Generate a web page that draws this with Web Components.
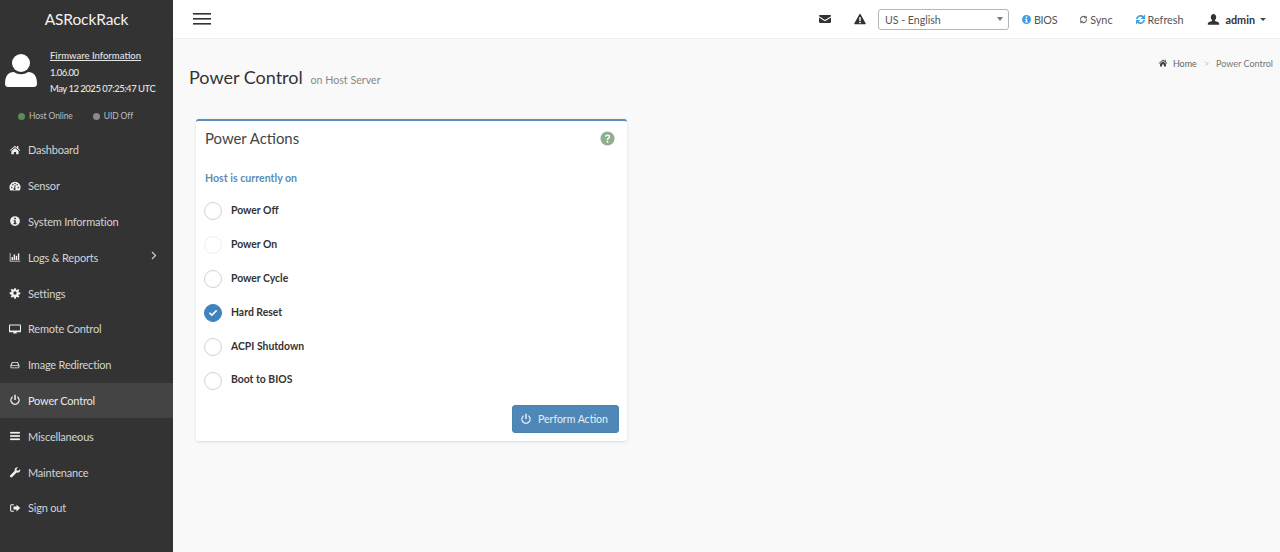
<!DOCTYPE html>
<html>
<head>
<meta charset="utf-8">
<title>Power Control</title>
<style>
html, body { margin: 0; height: 100%; }
body { font-family: Lato, "Noto Sans", "Liberation Sans", sans-serif; background: #f9f9f9; overflow: hidden; }
</style>
</head>
<body>

<bmc-app>
    <bmc-sidebar slot="side">
        <bmc-nav-item icon="home">Dashboard</bmc-nav-item>
        <bmc-nav-item icon="gauge">Sensor</bmc-nav-item>
        <bmc-nav-item icon="info">System Information</bmc-nav-item>
        <bmc-nav-item icon="chart" more>Logs &amp; Reports</bmc-nav-item>
        <bmc-nav-item icon="gear">Settings</bmc-nav-item>
        <bmc-nav-item icon="desktop">Remote Control</bmc-nav-item>
        <bmc-nav-item icon="hdd">Image Redirection</bmc-nav-item>
        <bmc-nav-item icon="power" active>Power Control</bmc-nav-item>
        <bmc-nav-item icon="bars">Miscellaneous</bmc-nav-item>
        <bmc-nav-item icon="wrench">Maintenance</bmc-nav-item>
        <bmc-nav-item icon="signout">Sign out</bmc-nav-item>
    </bmc-sidebar>
    <bmc-topbar slot="top"></bmc-topbar>
    <bmc-page-head></bmc-page-head>
    <bmc-power-card>
        <bmc-radio>Power Off</bmc-radio>
        <bmc-radio disabled>Power On</bmc-radio>
        <bmc-radio>Power Cycle</bmc-radio>
        <bmc-radio checked>Hard Reset</bmc-radio>
        <bmc-radio>ACPI Shutdown</bmc-radio>
        <bmc-radio>Boot to BIOS</bmc-radio>
    </bmc-power-card>
</bmc-app>

<script>
// all glyphs on a 16 unit box, filled with currentColor
const ICONS =
{
    home: `<path d="M8 2.200 1 8.200l.8.900L8 3.900l6.200 5.200.8-.9-2.600-2.200V2.800h-1.700v2.100z"/><path d="M3.200 9.300 8 5.200l4.800 4.100v4.200H9.500v-3h-3v3H3.200z"/>`,
    gauge: `<path fill-rule="evenodd" d="M8 2.400a7.400 7.400 0 0 0-6.400 11.100c.2.400.5.5.9.5h11c.4 0 .7-.1.9-.5A7.400 7.400 0 0 0 8 2.400zM3.600 10.900a1 1 0 1 1 0-2 1 1 0 0 1 0 2zm1.500-3.600a1 1 0 1 1 0-2 1 1 0 0 1 0 2zm3.700 4.200a1.400 1.400 0 1 1-1.900-.9l.9-3.800a.6.6 0 0 1 1.100.3l-.8 3.700c.3.1.6.4.7.7zM8 5.800a1 1 0 1 1 0-2 1 1 0 0 1 0 2zm4.400 5.100a1 1 0 1 1 0-2 1 1 0 0 1 0 2zm-1.500-3.600a1 1 0 1 1 0-2 1 1 0 0 1 0 2z"/>`,
    info: `<path fill-rule="evenodd" d="M8 1.500a6.500 6.500 0 1 0 0 13 6.500 6.500 0 0 0 0-13zM6.900 3.800h2.200v1.900H6.900zM10 12.200H6v-1.400h1V8.300H6V6.900h3v3.900h1z"/>`,
    chart: `<path d="M1 2.500h1v10.400h13v1H1z"/><rect x="3.400" y="8" width="1.900" height="4"/><rect x="6.200" y="4.500" width="1.900" height="7.500"/><rect x="9" y="6.400" width="1.900" height="5.600"/><rect x="11.800" y="3.200" width="1.900" height="8.800"/>`,
    gear: `<path fill-rule="evenodd" d="M6.900 1.500h2.200l.3 2 1.100.5 1.700-1.200 1.500 1.500-1.200 1.700.5 1.100 2 .3v2.200l-2 .3-.5 1.100 1.200 1.700-1.500 1.500-1.700-1.200-1.100.5-.3 2H6.900l-.3-2-1.100-.5-1.700 1.200-1.500-1.500 1.200-1.700-.5-1.100-2-.3V6.900l2-.3.5-1.100-1.200-1.700 1.500-1.500 1.700 1.200 1.100-.5zM8 5.800a2.200 2.200 0 1 0 0 4.400 2.200 2.200 0 0 0 0-4.400z"/>`,
    desktop: `<path fill-rule="evenodd" d="M1.200 2h13.600c.6 0 1.200.5 1.200 1.200v8c0 .7-.6 1.200-1.200 1.200H10c0 .9.5 1.300.5 1.600H5.500c0-.3.5-.7.5-1.600H1.200C.6 12.400 0 11.900 0 11.200v-8C0 2.500.6 2 1.200 2zm.2 1.400v6.600h13.200V3.400z"/>`,
    hdd: `<path transform="translate(1.500 1.500) scale(.8)" fill-rule="evenodd" d="M4 3h8c.5 0 .9.3 1.100.7l2.200 4.600c.1.2.2.4.2.7v3c0 .8-.6 1.400-1.400 1.400H1.900c-.8 0-1.400-.6-1.400-1.400V9c0-.3.1-.5.200-.7l2.200-4.600C3.100 3.300 3.500 3 4 3zm.3 1.300L2.500 8h11l-1.800-3.700zM2 9.400v2.400c0 .2.100.3.3.3h11.400c.2 0 .3-.1.3-.3V9.400z"/>`,
    power: `<path d="M7 1h2v7H7z"/><path d="M4.800 2.800V5a4.500 4.500 0 1 0 6.400 0V2.800a6.300 6.300 0 1 1-6.400 0z"/>`,
    bars: `<rect x="1.500" y="2.500" width="13" height="2.300"/><rect x="1.500" y="6.850" width="13" height="2.300"/><rect x="1.500" y="11.200" width="13" height="2.300"/>`,
    wrench: `<path d="M14.800 4.300c.4 1.200.1 2.700-.9 3.600-1 1-2.400 1.300-3.700.9l-5.900 5.900c-.7.700-1.800.7-2.500 0s-.7-1.800 0-2.500l5.900-5.900c-.4-1.300-.1-2.700.9-3.700 1-1 2.300-1.300 3.600-.9L9.900 4.100l.4 1.900 1.900.4z"/>`,
    signout: `<path d="M6.500 3H3.400C2.400 3 1.500 3.900 1.500 5v6c0 1.100.9 2 1.900 2h3.100v-1.400H3.600c-.4 0-.7-.3-.7-.7V5.100c0-.4.3-.7.7-.7h2.900z"/><path d="M10 3.500 15 8l-5 4.500V10H6V6h4z"/>`,
    mail: `<path d="M1.300 2.800h13.400c.7 0 1.300.6 1.300 1.300v.3L8 9.300 0 4.400v-.3c0-.7.6-1.300 1.300-1.300z"/><path d="M0 6.100l8 4.900 8-4.900v6c0 .7-.6 1.200-1.300 1.200H1.300C.6 13.300 0 12.800 0 12.100z"/>`,
    warn: `<path fill-rule="evenodd" d="M8 1.300c.3 0 .6.2.8.5l6.700 11.800c.4.7-.1 1.400-.8 1.400H1.300c-.7 0-1.200-.7-.8-1.400L7.200 1.800c.2-.3.5-.5.8-.5zM6.900 5.600l.2 5h1.800l.2-5zM7 11.500v2h2v-2z"/>`,
    user: `<path d="M8 1.200c1.900 0 3.300 1.700 3.300 3.900 0 1.500-.7 2.800-1.500 3.600v1c2.900.9 5.200 1.700 5.200 3.100v1.600H1v-1.600c0-1.400 2.300-2.200 5.200-3.100v-1C5.400 7.900 4.700 6.600 4.700 5.100c0-2.200 1.400-3.900 3.300-3.900z"/>`,
    sync: `<path d="M2.600 8.500a5.400 5.400 0 0 1 8.700-4.800" fill="none" stroke="currentColor" stroke-width="2"/><path d="M13.400 1 14 6.800 8.400 5.500z"/><path d="M13.400 7.500a5.400 5.400 0 0 1-8.700 4.800" fill="none" stroke="currentColor" stroke-width="2"/><path d="M2.600 15 2 9.200l5.600 1.300z"/>`,
    refresh: `<path d="M2.400 7.500a5.800 5.800 0 0 1 9.600-3.300" fill="none" stroke="currentColor" stroke-width="2.400"/><path d="M14.500.8v6.400H8.100z"/><path d="M13.600 8.500a5.800 5.800 0 0 1-9.600 3.300" fill="none" stroke="currentColor" stroke-width="2.400"/><path d="M1.500 15.200V8.800h6.400z"/>`,
    check: `<path d="M6.700 11.800 3.200 8.300l1.300-1.300 2.200 2.200 4.800-4.800 1.300 1.300z"/>`
};

function icon(name, size)
{
    return `<svg viewBox="0 0 16 16" width="${size}" height="${size}" fill="currentColor" aria-hidden="true">${ICONS[name]}</svg>`;
}

class BmcApp extends HTMLElement
{
    connectedCallback()
    {
        var shadow = this.attachShadow({mode: "open"});
        shadow.innerHTML =
        `<style>
        :host
        {
            display: grid;
            grid-template-columns: 173px 1fr;
            grid-template-rows: 39px 1fr;
            height: 552px;
        }
        .side { grid-row: 1 / span 2; display: flex; }
        .main { padding: 0 7px 0 16px; min-width: 0; }
        </style>
        <div class="side"><slot name="side"></slot></div>
        <div><slot name="top"></slot></div>
        <div class="main"><slot></slot></div>`;
    }
}

class BmcSidebar extends HTMLElement
{
    connectedCallback()
    {
        var shadow = this.attachShadow({mode: "open"});
        shadow.innerHTML =
        `<style>
        :host
        {
            display: block;
            width: 173px;
            background: #333333;
            color: #d8d8d8;
            font-size: 11px;
            letter-spacing: -0.2px;
        }
        .brand
        {
            height: 39px;
            line-height: 38px;
            text-align: center;
            font-size: 15.500px;
            letter-spacing: -0.1px;
            color: #f2f2f2;
        }
        .user
        {
            display: flex;
            gap: 13px;
            padding: 9px 0 0 5px;
            height: 50px;
        }
        .avatar { color: #fff; padding-top: 5px; }
        .info
        {
            font-size: 9.500px;
            font-weight: 500;
            line-height: 16.500px;
            letter-spacing: 0;
            color: #e4e4e4;
            white-space: nowrap;
        }
        .info u { display: block; }
        .info span { letter-spacing: -0.5px; }
        .status
        {
            display: flex;
            padding: 10px 0 0 18px;
            height: 16px;
            font-size: 8.500px;
            letter-spacing: -0.1px;
            color: #bdbdbd;
            line-height: 11px;
        }
        .status span { display: flex; align-items: center; gap: 4px; }
        .status span + span { margin-left: 20px; }
        .status i { width: 7px; height: 7px; border-radius: 50%; }
        nav { display: flex; flex-direction: column; padding-top: 8px; }
        </style>
        <div class="brand">ASRockRack</div>
        <div class="user">
            <div class="avatar">
                <svg viewBox="0 0 32 36" width="32" height="36" fill="currentColor"><circle cx="16" cy="10" r="9"/><path d="M0 31c0-8 3-12 9-12 2 1.500 4.500 2.200 7 2.200s5-.7 7-2.200c6 0 9 4 9 12 0 2-1.500 3-3 3H3c-1.500 0-3-1-3-3z"/></svg>
            </div>
            <div class="info"><u>Firmware Information</u><span>1.06.00</span><br><span>May 12 2025 07:25:47 UTC</span></div>
        </div>
        <div class="status">
            <span><i style="background:#5d8a55"></i>Host Online</span>
            <span><i style="background:#8a8a8a"></i>UID Off</span>
        </div>
        <nav><slot></slot></nav>`;
    }
}

class BmcNavItem extends HTMLElement
{
    connectedCallback()
    {
        var active = this.hasAttribute("active");
        var more = this.hasAttribute("more");
        var shadow = this.attachShadow({mode: "open"});
        shadow.innerHTML =
        `<style>
        :host
        {
            display: flex;
            align-items: center;
            height: 35.800px;
            padding-left: 9px;
            background: ${active ? "#444444" : "transparent"};
            color: ${active ? "#e8e8e8" : "#d4d4d4"};
        }
        .ic { width: 19px; display: flex; color: #f0f0f0; }
        .more { margin-left: auto; margin-right: 16px; margin-top: -4px; display: flex; color: #cfcfcf; }
        </style>
        <span class="ic">${icon(this.getAttribute("icon"), 12)}</span>
        <slot></slot>
        ${more ? `<span class="more"><svg width="6" height="9" viewBox="0 0 6 9" fill="none" stroke="currentColor" stroke-width="1.200"><path d="M1 1l3.500 3.500L1 8"/></svg></span>` : ""}`;
    }
}

class BmcTopbar extends HTMLElement
{
    connectedCallback()
    {
        var shadow = this.attachShadow({mode: "open"});
        shadow.innerHTML =
        `<style>
        :host
        {
            display: flex;
            align-items: center;
            height: 38px;
            background: #fff;
            border-bottom: 1px solid #efefef;
            color: #555;
            font-size: 10.800px;
        }
        .burger { margin-left: 20px; display: flex; color: #333; }
        .right { margin-left: auto; display: flex; align-items: center; height: 100%; padding-right: 14px; }
        .ic { display: flex; color: #333; }
        .link { display: flex; align-items: center; gap: 2px; }
        .select
        {
            display: flex;
            align-items: center;
            box-sizing: border-box;
            width: 131px;
            height: 21px;
            margin: 0 12px 0 12px;
            padding: 1px 0 0 6px;
            border: 1px solid #b5b5b5;
            border-radius: 3px;
            position: relative;
            font-size: 10.600px;
        }
        .select::after
        {
            content: "";
            position: absolute;
            right: 5px;
            top: 7px;
            border: 3.500px solid transparent;
            border-top: 4px solid #777;
        }
        .admin { display: flex; align-items: center; font-weight: 700; color: #333; }
        .caret { margin-left: 5px; margin-top: 3px; border: 3px solid transparent; border-top: 3.500px solid #444; height: 0; }
        </style>
        <div class="burger">
            <svg width="18" height="12" viewBox="0 0 18 12" fill="currentColor"><rect width="18" height="1.600"/><rect y="5" width="18" height="1.600"/><rect y="10" width="18" height="1.600"/></svg>
        </div>
        <div class="right">
            <span class="ic">${icon("mail", 12)}</span>
            <span class="ic" style="margin-left:23px">${icon("warn", 12)}</span>
            <div class="select">US - English</div>
            <span class="link" style="letter-spacing:-0.3px"><span class="ic" style="color:#3c9ee0">${icon("info", 11)}</span>BIOS</span>
            <span class="link" style="margin-left:22px"><span class="ic" style="color:#666">${icon("sync", 9)}</span>Sync</span>
            <span class="link" style="margin-left:22px"><span class="ic" style="color:#3c9ee0">${icon("refresh", 11)}</span>Refresh</span>
            <span class="admin" style="margin-left:23px"><span class="ic" style="margin-right:6px">${icon("user", 13)}</span>admin<span class="caret"></span></span>
        </div>`;
    }
}

class BmcPageHead extends HTMLElement
{
    connectedCallback()
    {
        var shadow = this.attachShadow({mode: "open"});
        shadow.innerHTML =
        `<style>
        :host
        {
            display: flex;
            justify-content: space-between;
            height: 80px;
            color: #333;
        }
        h1
        {
            margin: 26px 0 0;
            font-size: 18px;
            font-weight: 400;
            line-height: 24px;
        }
        small { font-size: 10.700px; color: #888; margin-left: 3px; }
        .crumbs
        {
            display: flex;
            align-items: center;
            gap: 7px;
            height: 12px;
            margin-top: 18px;
            font-size: 9px;
            color: #666;
        }
        .crumbs svg { margin-right: -2px; color: #444; }
        .sep { color: #c4c4c4; }
        .cur { color: #777; }
        </style>
        <h1>Power Control <small>on Host Server</small></h1>
        <div class="crumbs">${icon("home", 10)}<span>Home</span><span class="sep">&gt;</span><span class="cur">Power Control</span></div>`;
    }
}

class BmcPowerCard extends HTMLElement
{
    connectedCallback()
    {
        var shadow = this.attachShadow({mode: "open"});
        shadow.innerHTML =
        `<style>
        :host
        {
            display: block;
            box-sizing: border-box;
            width: 431px;
            height: 322px;
            margin-left: 7px;
            background: #fff;
            border-top: 2px solid #5d8db5;
            border-radius: 3px;
            box-shadow: 0 1px 3px rgba(0,0,0,0.12);
            padding: 0 8px;
            color: #333;
        }
        .head { display: flex; align-items: center; justify-content: space-between; height: 34px; }
        h3 { margin: 0 0 0 1px; font-size: 14.900px; font-weight: 400; color: #444; }
        .help { color: #8fb08c; display: flex; margin-right: 4px; }
        .state { margin: 16px 0 0 1px; font-size: 10.600px; font-weight: 700; color: #5b8db5; line-height: 15px; }
        .list { margin-top: 8px; display: flex; flex-direction: column; }
        .foot { display: flex; justify-content: flex-end; margin-top: 7.500px; }
        button
        {
            display: flex;
            align-items: center;
            gap: 6px;
            width: 107px;
            height: 28px;
            padding: 0 0 0 7px;
            border: 1px solid #4a82b0;
            border-radius: 3px;
            background: #4f88b8;
            color: #e6eef5;
            font: inherit;
            font-size: 10.500px;
        }
        </style>
        <div class="head">
            <h3>Power Actions</h3>
            <span class="help"><svg width="15" height="15" viewBox="0 0 16 16"><circle cx="8" cy="8" r="7.500" fill="currentColor"/><path d="M5.400 6.200C5.500 4.600 6.700 3.700 8.200 3.700c1.500 0 2.700.9 2.700 2.300 0 2-2.200 2-2.200 3.500H7.100c0-2.300 2.100-2.300 2.100-3.500 0-.6-.5-1-1.100-1-.7 0-1.100.4-1.200 1.200zM7.100 10.400h1.700v1.800H7.100z" fill="#fff"/></svg></span>
        </div>
        <div class="state">Host is currently on</div>
        <div class="list"><slot></slot></div>
        <div class="foot"><button>${icon("power", 12)}Perform Action</button></div>`;
    }
}

class BmcRadio extends HTMLElement
{
    connectedCallback()
    {
        var checked = this.hasAttribute("checked");
        var disabled = this.hasAttribute("disabled");
        var shadow = this.attachShadow({mode: "open"});
        shadow.innerHTML =
        `<style>
        :host
        {
            display: flex;
            align-items: center;
            gap: 9px;
            height: 33.900px;
            font-size: 10.400px;
            font-weight: 700;
            color: #333;
        }
        .dot
        {
            box-sizing: border-box;
            width: 18px;
            height: 18px;
            margin-top: 1px;
            border-radius: 50%;
            border: 1px solid ${disabled ? "#eeeeee" : "#d3d3d3"};
            background: ${checked ? "#3f82bd" : "#fff"};
            border-color: ${checked ? "#3f82bd" : disabled ? "#eeeeee" : "#d3d3d3"};
            color: #fff;
            display: flex;
            align-items: center;
            justify-content: center;
        }
        .txt { margin-top: -2px; }
        </style>
        <span class="dot">${checked ? icon("check", 14) : ""}</span>
        <span class="txt"><slot></slot></span>`;
    }
}

customElements.define("bmc-app", BmcApp);
customElements.define("bmc-sidebar", BmcSidebar);
customElements.define("bmc-nav-item", BmcNavItem);
customElements.define("bmc-topbar", BmcTopbar);
customElements.define("bmc-page-head", BmcPageHead);
customElements.define("bmc-power-card", BmcPowerCard);
customElements.define("bmc-radio", BmcRadio);
</script>
</body>
</html>
